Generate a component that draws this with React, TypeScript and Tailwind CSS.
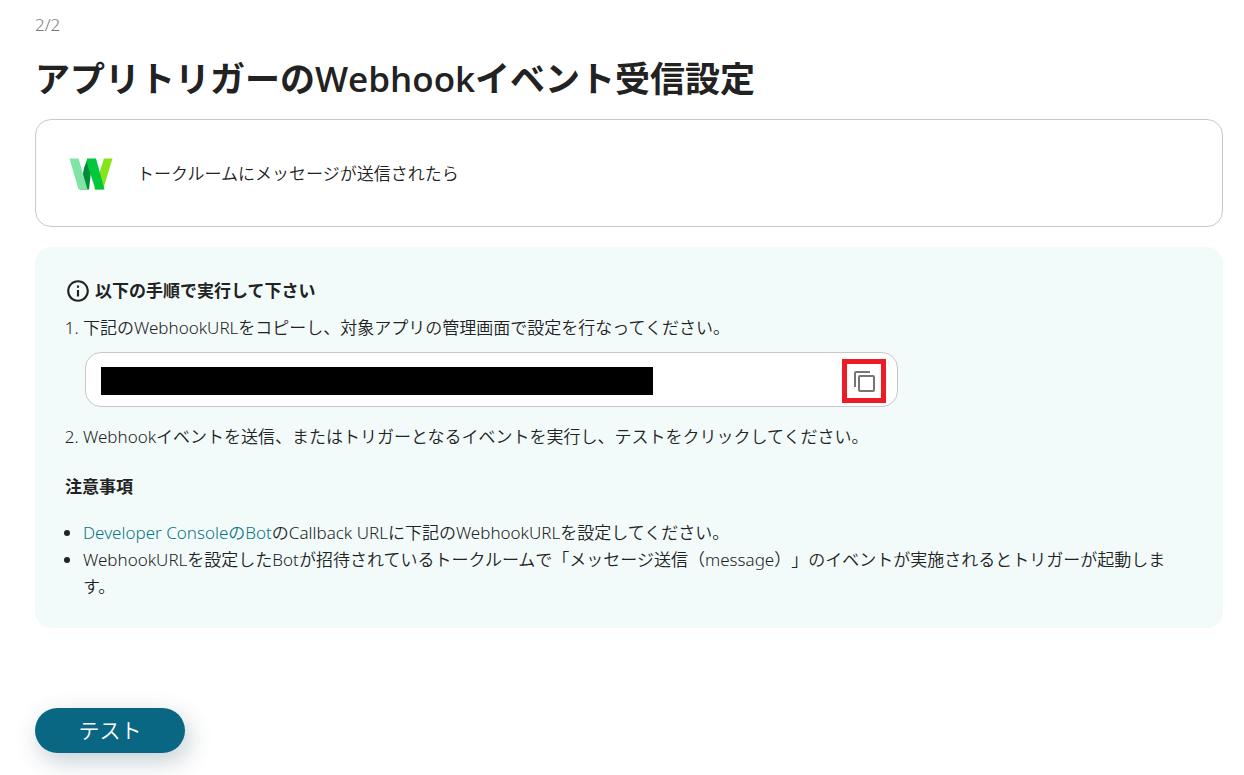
import React from "react";

function AppLogo() {
  return (
    <svg viewBox="0 0 44 32" className="h-8 w-11 shrink-0" aria-hidden="true">
      <path d="M35 0.5H43.5L34 31.5H25Z" fill="#84e619" />
      <path d="M18.500 0.500L23 5L20 31.500H11L15 10Z" fill="#008c3a" />
      <path d="M0.500 0.500H9.500L18.500 31.500H9.500Z" fill="#7fe5a4" />
      <path d="M18.500 0.500H27L35.500 31.500H26.500L17.500 4Z" fill="#00c73c" />
    </svg>
  );
}

function InfoIcon() {
  return (
    <svg viewBox="0 0 24 24" className="size-[26px] shrink-0" fill="currentColor" aria-hidden="true">
      <path d="M11 7h2v2h-2zm0 4h2v6h-2zm1-9C6.480 2 2 6.480 2 12s4.480 10 10 10 10-4.480 10-10S17.520 2 12 2zm0 18c-4.410 0-8-3.590-8-8s3.590-8 8-8 8 3.590 8 8-3.590 8-8 8z" />
    </svg>
  );
}

function CopyIcon() {
  return (
    <svg viewBox="0 0 22 22" className="size-[22px]" fill="none" stroke="#757575" strokeWidth="2" aria-hidden="true">
      <path d="M2 17V3a1 1 0 0 1 1-1H17" />
      <rect x="6" y="6" width="15" height="15" rx="1" />
    </svg>
  );
}

export default function App() {
  return (
    <main
      lang="ja"
      className="bg-white pt-[11px] pr-[21px] pb-[22px] pl-[35px] font-['Noto_Sans','Noto_Sans_CJK_JP',sans-serif] text-[17px] leading-[27px] font-[350] text-[#222] [text-spacing-trim:space-all]"
    >
      <p className="text-[#777]">2/2</p>
      <h1 className="mt-[17px] font-['Open_Sans','Noto_Sans_CJK_JP',sans-serif] text-[35px] leading-[48px] font-semibold">
        アプリトリガーのWebhookイベント受信設定
      </h1>

      <section className="mt-4 flex h-[108px] items-center gap-6 rounded-2xl border border-[#c8c8c8] px-[33px] pt-px">
        <AppLogo />
        <p>トークルームにメッセージが送信されたら</p>
      </section>

      <section className="mt-5 rounded-2xl bg-[#f2fbfa] px-[30px] pt-[30px] pb-7">
        <h2 className="flex items-center gap-1 font-bold">
          <InfoIcon />
          以下の手順で実行して下さい
        </h2>
        <ol className="mt-[10px] list-decimal pl-[18px]">
          <li>
            下記のWebhookURLをコピーし、対象アプリの管理画面で設定を行なってください。
            <div className="mt-[11px] ml-[2px] flex h-[55px] max-w-[813px] items-center justify-between rounded-2xl border border-[#c8c8c8] bg-white pt-[2px] pr-[11px] pl-[15px]">
              <input
                type="text"
                readOnly
                aria-label="WebhookURL"
                className="h-7 w-[552px] bg-black text-black outline-none"
              />
              <button
                type="button"
                aria-label="コピー"
                className="flex size-11 items-center justify-center border-[5px] border-[#ed1c24]"
              >
                <CopyIcon />
              </button>
            </div>
          </li>
          <li className="mt-4">
            Webhookイベントを送信、またはトリガーとなるイベントを実行し、テストをクリックしてください。
          </li>
        </ol>
        <h2 className="mt-[23px] font-bold">注意事項</h2>
        <ul className="mt-[19px] list-disc pr-4 pl-[18px]">
          <li>
            <a href="#" className="text-[#0b7488]">
              Developer ConsoleのBot
            </a>
            のCallback URLに下記のWebhookURLを設定してください。
          </li>
          <li>
            WebhookURLを設定したBotが招待されているトークルームで「メッセージ送信（message）」のイベントが実施されるとトリガーが起動します。
          </li>
        </ul>
      </section>

      <button
        type="button"
        className="mt-20 h-[45px] w-[150px] rounded-full bg-[#0a6783] text-[21px] text-white shadow-[4px_8px_24px_rgba(10,50,70,0.24)]"
      >
        テスト
      </button>
    </main>
  );
}
